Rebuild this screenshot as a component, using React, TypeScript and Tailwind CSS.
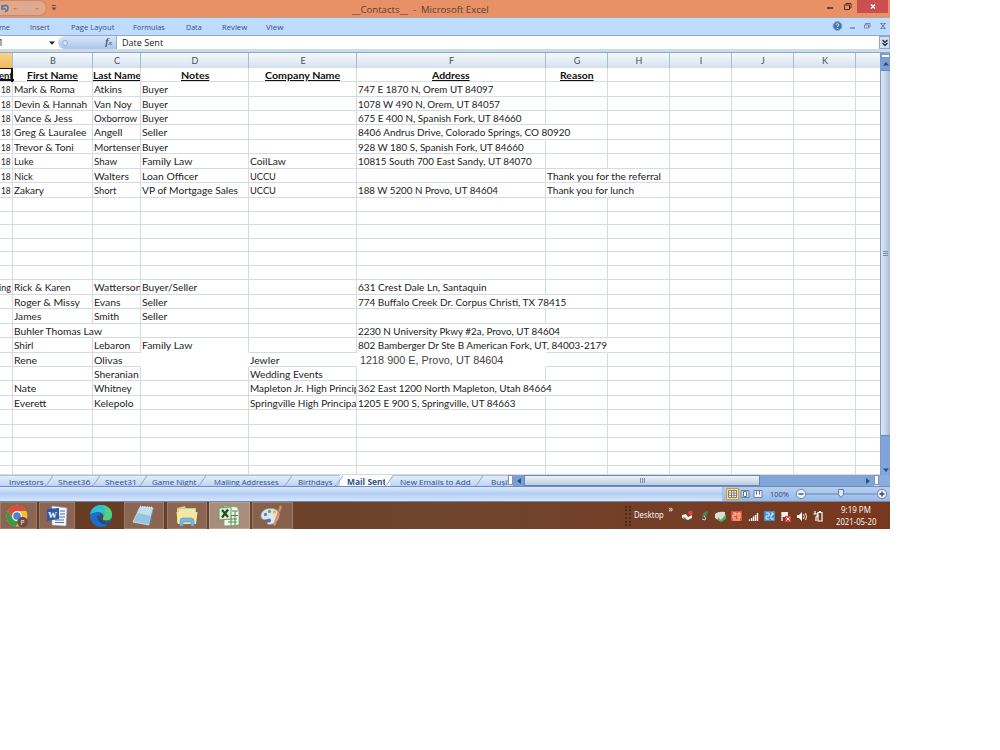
import { useLayoutEffect, useRef, type ReactNode } from 'react'

// Renders a label squeezed or stretched to an exact width in pixels
function Fit({ w, className = '', children }: { w: number; className?: string; children: ReactNode }) {
    const ref = useRef<HTMLSpanElement>(null)

    useLayoutEffect(() => {
        const el = ref.current
        if (!el) return
        el.style.transform = `scaleX(${w / el.offsetWidth})`
    }, [w])

    return (
        <span className="inline-block flex-none whitespace-nowrap" style={{ width: w }}>
            <span ref={ref} className={`inline-block origin-left ${className}`}>
                {children}
            </span>
        </span>
    )
}

const columns = [
    { name: '', width: 13 },
    { name: 'B', width: 80 },
    { name: 'C', width: 48 },
    { name: 'D', width: 108 },
    { name: 'E', width: 108 },
    { name: 'F', width: 189 },
    { name: 'G', width: 62 },
    { name: 'H', width: 62 },
    { name: 'I', width: 62 },
    { name: 'J', width: 62 },
    { name: 'K', width: 62 },
    { name: '', width: 24 },
]

type Cell = [text: string, width: number]
type Row = { h: number; cells?: Record<number, Cell>; open?: number[]; bare?: number[] }

// open: columns without a right grid line, bare: columns without a bottom grid line
const rows: Row[] = [
    { h: 15, cells: { 0: ['18', 10], 1: ['Mark & Roma', 61], 2: ['Atkins', 27.5], 3: ['Buyer', 26], 5: ['747 E 1870 N, Orem UT 84097', 135] } },
    { h: 14, cells: { 0: ['18', 10], 1: ['Devin & Hannah', 73], 2: ['Van Noy', 37.5], 3: ['Buyer', 26], 5: ['1078 W 490 N, Orem, UT 84057', 142] } },
    { h: 14, cells: { 0: ['18', 10], 1: ['Vance & Jess', 59], 2: ['Oxborrow', 43.5], 3: ['Buyer', 26], 5: ['675 E 400 N, Spanish Fork, UT 84660', 163.5] } },
    { h: 15, cells: { 0: ['18', 10], 1: ['Greg & Lauralee', 73], 2: ['Angell', 28], 3: ['Seller', 25], 5: ['8406 Andrus Drive, Colorado Springs, CO 80920', 212.5] }, open: [5] },
    { h: 14, cells: { 0: ['18', 10], 1: ['Trevor & Toni', 60], 2: ['Mortensen', 48], 3: ['Buyer', 26], 5: ['928 W 180 S, Spanish Fork, UT 84660', 165.5] } },
    { h: 15, cells: { 0: ['18', 10], 1: ['Luke', 20], 2: ['Shaw', 23.5], 3: ['Family Law', 50], 4: ['CoilLaw', 36], 5: ['10815 South 700 East Sandy, UT 84070', 174] } },
    { h: 14, cells: { 0: ['18', 10], 1: ['Nick', 19], 2: ['Walters', 35], 3: ['Loan Officer', 56], 4: ['UCCU', 26], 6: ['Thank you for the referral', 114] }, open: [6] },
    { h: 15, cells: { 0: ['18', 10], 1: ['Zakary', 30], 2: ['Short', 22.5], 3: ['VP of Mortgage Sales', 96], 4: ['UCCU', 26], 5: ['188 W 5200 N Provo, UT 84604', 139.5], 6: ['Thank you for lunch', 87] }, open: [6] },
    { h: 14 },
    { h: 13 },
    { h: 14 },
    { h: 13 },
    { h: 14 },
    { h: 14 },
    { h: 15, cells: { 0: ['ning', 17], 1: ['Rick & Karen', 57], 2: ['Watterson', 47.5], 3: ['Buyer/Seller', 55], 5: ['631 Crest Dale Ln, Santaquin', 129] } },
    { h: 14, cells: { 1: ['Roger & Missy', 66], 2: ['Evans', 26], 3: ['Seller', 25], 5: ['774 Buffalo Creek Dr. Corpus Christi, TX 78415', 208] }, open: [5] },
    { h: 15, cells: { 1: ['James', 27.5], 2: ['Smith', 25], 3: ['Seller', 25] } },
    { h: 14, cells: { 1: ['Buhler Thomas Law', 88], 5: ['2230 N University Pkwy #2a, Provo, UT 84604', 202.5] }, open: [1, 5] },
    { h: 15, cells: { 1: ['Shirl', 19], 2: ['Lebaron', 36], 3: ['Family Law', 50], 5: ['802 Bamberger Dr Ste B American Fork, UT, 84003-2179', 249] }, open: [5, 6], bare: [3, 5] },
    { h: 14, cells: { 1: ['Rene', 23], 2: ['Olivas', 28.5], 4: ['Jewler', 29], 5: ['1218 900 E, Provo, UT 84604', 143] }, open: [2, 3, 4, 5], bare: [3, 5] },
    { h: 14, cells: { 2: ['Sheranian', 44.5], 4: ['Wedding Events', 72.5] } },
    { h: 15, cells: { 1: ['Nate', 22], 2: ['Whitney', 38], 4: ['Mapleton Jr. High Principal', 117], 5: ['362 East 1200 North Mapleton, Utah 84664', 193.5] }, open: [5] },
    { h: 14, cells: { 1: ['Everett', 32], 2: ['Kelepolo', 39], 4: ['Springville High Principal', 109], 5: ['1205 E 900 S, Springville, UT 84663', 157.5] } },
    { h: 15 },
    { h: 13 },
    { h: 14 },
    { h: 14 },
    { h: 9 },
]

const titles: Record<number, Cell> = {
    1: ['First Name', 50.5],
    2: ['Last Name', 48],
    3: ['Notes', 28],
    4: ['Company Name', 75],
    5: ['Address', 37.5],
    6: ['Reason', 34],
}

const ribbonTabs = [
    { label: 'ome', w: 15, gap: 'ml-[-5px]' },
    { label: 'Insert', w: 20, gap: 'ml-[19.5px]' },
    { label: 'Page Layout', w: 43, gap: 'ml-[21px]' },
    { label: 'Formulas', w: 32, gap: 'ml-[19.5px]' },
    { label: 'Data', w: 16, gap: 'ml-[21px]' },
    { label: 'Review', w: 25, gap: 'ml-[20px]' },
    { label: 'View', w: 17, gap: 'ml-[19px]' },
]

const sheets = [
    { name: 'Investors', w: 34.5, box: 'w-[50px] pl-[8.5px]' },
    { name: 'Sheet36', w: 32, box: 'w-[47px] pl-[7.5px]' },
    { name: 'Sheet31', w: 31.5, box: 'w-[47px] pl-[7.5px]' },
    { name: 'Game Night', w: 44, box: 'w-[59px] pl-[8px]' },
    { name: 'Mailing Addresses', w: 65, box: 'w-[86px] pl-[11px]' },
    { name: 'Birthdays', w: 34, box: 'w-[51px] pl-[9px]' },
    { name: 'Mail Sent', w: 39, box: 'w-[50px] pl-[6.5px]', active: true },
    { name: 'New Emails to Add', w: 71, box: 'w-[90px] pl-[10px]' },
    { name: 'Busine', w: 25.5, box: 'w-[28px] pl-[11px] overflow-hidden' },
]

function TitleBar() {
    return (
        <div className="relative flex h-[18px] border-b border-[#b9a29a] bg-[#e89166]">
            <div className="flex h-4 w-[47px] items-center rounded-r-full border border-l-0 border-[#c98a6c] bg-[#e3a889]">
                <svg className="h-[14px] w-[46px]" viewBox="0 0 46 14" fill="none">
                    <path d="M2 4v4h4M2 7c2-4 6-3 6 0 0 2-1 3-3 4" stroke="#4f77ab" strokeWidth="1.6" />
                    <path d="M13 7h4l-2 2zM35 7h4l-2 2z" fill="#a6877d" />
                    <path d="M30 4v4h-4M30 7c-2-4-6-3-6 0 0 2 1 3 3 4" stroke="#c9afa4" strokeWidth="1.4" />
                </svg>
            </div>
            <svg className="ml-1 mt-[5px] h-[6px] w-[6px]" viewBox="0 0 6 6">
                <path d="M1 0h4v1H1zM0.5 2.5h5L3 5.5z" fill="#6b4a3e" />
            </svg>
            <div className="ml-[295px] flex pt-[2px] text-[9.5px] leading-[15px] text-[#5b4036]">
                <Fit w={136.5}>__Contacts__&nbsp; -&nbsp; Microsoft Excel</Fit>
            </div>
            <svg className="ml-auto h-[17px] w-[70px]" viewBox="0 0 70 17" fill="none">
                <path d="M7 8h6" stroke="#4b3128" strokeWidth="1.6" />
                <path d="M24.500 5h5v4.500h-5zM26 5V3.500h5v4.500h-1.500" stroke="#4b3128" />
                <path d="M37 0h31v13H37z" fill="#c94f50" />
                <path d="M51 4.500l4 4M55 4.500l-4 4" stroke="#fff" strokeWidth="1.400" />
            </svg>
        </div>
    )
}

function Ribbon() {
    return (
        <div className="flex h-[18px] items-center border-b border-[#8ea9cb] bg-[#bfdbff] text-[8px] text-[#35507d]">
            {ribbonTabs.map((tab) => (
                <div key={tab.label} className={`flex pt-px ${tab.gap}`}>
                    <Fit w={tab.w}>{tab.label}</Fit>
                </div>
            ))}
            <svg className="ml-auto h-4 w-[60px]" viewBox="0 0 60 16" fill="none">
                <circle cx="7.500" cy="7" r="4.300" fill="#3f74b8" stroke="#8095b3" />
                <path d="M6 5.700c.3-1.500 3-1.300 2.700.2-.2 1-1.300 1-1.300 2M7.400 9v1" stroke="#fff" strokeWidth=".9" />
                <path d="M20 9h5" stroke="#6a7c98" strokeWidth="1.300" />
                <path d="M34.500 6h4v3h-4zM35.500 6V4.500h4.500V8h-1" stroke="#76879f" />
                <path d="M51 4.500l4 5M55 4.500l-4 5M50.500 4.500h2M53.500 4.500h2M50.500 9.500h2M53.500 9.500h2" stroke="#64748f" />
            </svg>
        </div>
    )
}

function FormulaBar() {
    return (
        <div className="flex h-[16px] border-b-[3px] border-[#cddbe8] bg-white text-[9.5px] leading-[14px] text-[#222]">
            <div className="flex w-[58px] items-center justify-between pr-[3px]">
                <span className="ml-[-2px]">1</span>
                <svg className="h-[4px] w-[6px]" viewBox="0 0 6 4">
                    <path d="M0 0.500h6L3 3.800z" fill="#222" />
                </svg>
            </div>
            <div className="flex w-[59px] items-center justify-between rounded-l-full border-r border-[#93aed0] bg-linear-to-b from-[#d9e8fb] to-[#a9c5ea] pl-[4px] pr-[4px]">
                <span className="h-[6px] w-[6px] rounded-full border border-[#91abd0] bg-[#d7e5f7]" />
                <span className="font-['Liberation_Serif',serif] text-[10px] font-bold italic text-[#48566b]">
                    f<span className="text-[7px]">x</span>
                </span>
            </div>
            <div className="flex pl-[5px]">
                <Fit w={41}>Date Sent</Fit>
            </div>
            <div className="ml-auto flex h-[13px] w-[11px] items-center justify-center border border-[#8ba7cd] bg-[#cfe0f6]">
                <svg className="h-[8px] w-[6px]" viewBox="0 0 6 8" fill="none">
                    <path d="M0.500 1L3 3.500 5.500 1M0.500 4L3 6.500 5.500 4" stroke="#222" strokeWidth="1.200" />
                </svg>
            </div>
        </div>
    )
}

function Grid() {
    return (
        <div className="w-[880px] overflow-hidden bg-white">
            <div className="flex h-[16px] border-t border-[#8ba9cb] bg-linear-to-b from-[#f5f9fd] to-[#d6e1ee] text-[9px] leading-[16px] text-[#4a4f57]">
                {columns.map((col, i) => (
                    <div
                        key={i}
                        className={`flex-none border-r border-[#a3bdd8] pl-px text-center last:border-r-0 ${i === 0 ? 'bg-linear-to-b from-[#f8d48a] to-[#f0b95b]' : ''}`}
                        style={{ width: col.width }}
                    >
                        {col.name}
                    </div>
                ))}
            </div>
            <div className="flex h-[14px] text-[9.5px] font-bold leading-[15px] text-[#111]">
                {columns.map((col, i) => (
                    <div
                        key={i}
                        className={`relative flex flex-none justify-center border-b border-r border-[#d5dce0] last:border-r-0 ${i === 2 ? 'overflow-hidden' : ''}`}
                        style={{ width: col.width }}
                    >
                        {i === 0 && (
                            <>
                                <Fit w={14}>ent</Fit>
                                <span className="absolute inset-y-0 -left-1 -right-px border-b-2 border-r-2 border-t border-[#111]" />
                                <span className="absolute -bottom-px -right-[2px] h-[3px] w-[3px] bg-[#111]" />
                            </>
                        )}
                        {titles[i] && (
                            <Fit w={titles[i][1]} className="underline decoration-1 underline-offset-1">
                                {titles[i][0]}
                            </Fit>
                        )}
                    </div>
                ))}
            </div>
            {rows.map((row, r) => (
                <div key={r} className="flex text-[10px] leading-[15px] text-[#222]" style={{ height: row.h }}>
                    {columns.map((col, i) => {
                        const cell = row.cells?.[i]
                        const edges = [
                            row.open?.includes(i) ? 'border-r-transparent' : 'border-r-[#d5dce0]',
                            row.bare?.includes(i) ? 'border-b-transparent' : 'border-b-[#d5dce0]',
                            i === 11 ? '' : 'border-r',
                            i === 2 || i === 4 ? 'overflow-hidden' : '',
                            i === 0 ? 'justify-end overflow-hidden pr-[1px]' : cell?.[0].startsWith('1218') ? '' : 'pl-[1px]',
                            cell?.[0].startsWith('1218') ? "pl-[2.5px] font-['Liberation_Sans',sans-serif] text-[11px] text-[#444]" : '',
                        ]
                        return (
                            <div key={i} className={`flex flex-none border-b ${edges.join(' ')}`} style={{ width: col.width }}>
                                {cell && <Fit w={cell[1]}>{cell[0]}</Fit>}
                            </div>
                        )
                    })}
                </div>
            ))}
        </div>
    )
}

function VerticalScroll() {
    return (
        <div className="flex w-[10px] flex-col border-l border-[#7d9cc9] bg-[#7fa5d9]">
            <div className="mt-[2px] h-[4px] border border-[#8096b8] bg-white" />
            <div className="flex h-[12px] items-center justify-center bg-[#7b9fd3]">
                <svg className="h-[4px] w-[6px]" viewBox="0 0 6 4">
                    <path d="M0 3.500h6L3 0z" fill="#2f4e80" />
                </svg>
            </div>
            <div className="flex h-[366px] items-center justify-center border-y border-[#6785b4] bg-linear-to-r from-[#dfe7f3] via-[#c9d5e8] to-[#a9bad8]">
                <div className="h-[5px] w-[5px] border-y border-[#7a8ba8]">
                    <div className="mt-[1px] h-px bg-[#7a8ba8]" />
                </div>
            </div>
            <div className="flex flex-1 items-end justify-center pb-[3px]">
                <svg className="h-[4px] w-[6px]" viewBox="0 0 6 4">
                    <path d="M0 0.500h6L3 4z" fill="#2f4e80" />
                </svg>
            </div>
        </div>
    )
}

function SheetBar() {
    return (
        <div className="flex h-[12px] border-b border-[#6f8db5] bg-[#cfe0f6] text-[8px] leading-[12px] text-[#2c5187]">
            <div className="flex w-[508px] overflow-hidden">
                {sheets.map((sheet) => (
                    <div
                        key={sheet.name}
                        className={`relative flex flex-none border-t ${sheet.active ? 'border-white bg-white font-bold' : 'border-[#a9c0de] bg-linear-to-b from-[#e3edfa] to-[#bdd4f5]'} ${sheet.box}`}
                    >
                        <Fit w={sheet.w}>{sheet.name}</Fit>
                        <svg className="absolute -right-[4px] bottom-0 z-10 h-[11px] w-[9px]" viewBox="0 0 9 11" fill="none">
                            {sheet.active && <path d="M0 0h8L1 11H0z" fill="#fff" />}
                            <path d="M8 0.500L2 9.500Q1.500 10.500 0 10.500" stroke="#8fa4c0" />
                        </svg>
                    </div>
                ))}
            </div>
            <div className="h-[10px] w-[5px] border border-[#8096b8] bg-white" />
            <div className="flex w-[11px] items-center justify-center bg-[#7b9fd3]">
                <svg className="h-[6px] w-[4px]" viewBox="0 0 4 6">
                    <path d="M4 0v6L0 3z" fill="#2f4e80" />
                </svg>
            </div>
            <div className="flex w-[236px] items-center justify-center border border-[#6785b4] bg-linear-to-b from-[#eef2f8] to-[#bccbe1]">
                <div className="flex h-[5px] w-[5px] justify-center border-x border-[#7a8ba8]">
                    <div className="w-px bg-[#7a8ba8]" />
                </div>
            </div>
            <div className="flex flex-1 items-center justify-end bg-[#7fa5d9] pr-[4px]">
                <svg className="h-[6px] w-[4px]" viewBox="0 0 4 6">
                    <path d="M0 0v6l4-3z" fill="#2f4e80" />
                </svg>
            </div>
            <div className="h-[10px] w-[5px] border border-[#8096b8] bg-white" />
            <div className="w-[11px] bg-[#8aade0]" />
        </div>
    )
}

function StatusBar() {
    return (
        <div className="flex h-[15px] items-center justify-end border-b border-[#7288a8] bg-linear-to-b from-[#dce9fb] via-[#b4cff5] to-[#d6e6fb] text-[8px] text-[#2d4a78]">
            <div className="flex h-full w-[168px] items-center border-l border-[#a6bddb] bg-linear-to-b from-[#b6cff0] to-[#98b9e6]">
                <svg className="ml-[3px] h-[12px] w-[38px]" viewBox="0 0 38 12" fill="none">
                    <path d="M.5.500h12v11H.500z" fill="#fbd98f" stroke="#c79b4d" />
                    <path d="M2.500 2.500h8v7h-8zM2.500 5h8M2.500 7.300h8M5.500 2.500v7M8 2.500v7" stroke="#6b6759" strokeWidth=".8" fill="#fff" />
                    <path d="M15 2.500h8v7h-8z" fill="#cbd4e1" stroke="#75839a" />
                    <path d="M17.500 3.500h3v5h-3z" fill="#fff" stroke="#66748a" />
                    <path d="M28 2.500h8v7h-8z" fill="#eef2f8" stroke="#75839a" />
                    <path d="M30.500 2.500v4M33.500 2.500v4" stroke="#66748a" />
                </svg>
                <span className="ml-[6px] flex">
                    <Fit w={18.5}>100%</Fit>
                </span>
                <svg className="ml-[5px] h-[14px] w-[94px]" viewBox="0 0 94 14" fill="none">
                    <path d="M12 7h70" stroke="#6784ad" />
                    <circle cx="7" cy="7" r="4.700" fill="#e8f0fa" stroke="#6d83a3" />
                    <path d="M4.500 7h5" stroke="#33435c" strokeWidth="1.300" />
                    <path d="M44.500 2.500h5v5L47 10.500l-2.500-3z" fill="#dce8f7" stroke="#6379a0" />
                    <circle cx="88" cy="7" r="4.700" fill="#e8f0fa" stroke="#6d83a3" />
                    <path d="M85.500 7h5M88 4.500v5" stroke="#33435c" strokeWidth="1.300" />
                </svg>
            </div>
        </div>
    )
}

function ChromeIcon() {
    return (
        <svg className="h-[24px] w-[24px]" viewBox="0 0 24 24">
            <circle cx="12" cy="12" r="10.500" fill="#f2c230" />
            <path d="M2.900 6.700A10.500 10.500 0 0 1 21.200 7H12a5 5 0 0 0-4.500 7z" fill="#dc4b3e" />
            <path d="M2.900 6.700l4.500 7.800A5 5 0 0 0 13 17l-2 5.400A10.500 10.500 0 0 1 2.900 6.700z" fill="#2f9b50" />
            <circle cx="12" cy="12" r="4.800" fill="#fff" />
            <circle cx="12" cy="12" r="3.800" fill="#4285dd" />
            <circle cx="17.500" cy="18" r="5.300" fill="#6d4b40" />
            <text x="15.600" y="20.500" fontSize="6.500" fill="#fff" fontFamily="Open Sans, sans-serif">P</text>
        </svg>
    )
}

function WordIcon() {
    return (
        <svg className="h-[22px] w-[22px]" viewBox="0 0 22 22">
            <path d="M6 1l15 2-1 18-14-1z" fill="#f2f5fa" stroke="#9aacc8" strokeWidth=".6" />
            <path d="M14 6h5M14 9h5M13 12h6M9 15h9M9 17.500h9" stroke="#4a70af" />
            <path d="M1 4l12-1v11L1 16z" fill="#2d5ba5" />
            <text x="2" y="12.500" fontSize="9" fontWeight="bold" fill="#fff" fontFamily="Liberation Serif, serif">W</text>
        </svg>
    )
}

function EdgeIcon() {
    return (
        <svg className="h-[24px] w-[24px]" viewBox="0 0 24 24">
            <circle cx="12" cy="12" r="11" fill="#1b6fc4" />
            <path d="M1.200 10C2 4 7 1 12 1c6 0 11 4 11 9.500 0 4-3 6-6.500 6-2.500 0-3.500-1-2.500-2.500 2-4-2-6-5-6-4 0-7 2-7.800 2z" fill="#31bfd4" />
            <path d="M14 1.200c6 1 9 5 9 9.300 0 4-3 6-6.500 6-2.500 0-3.500-1-2.500-2.500C17 10 17 5 14 1.200z" fill="#55cf79" />
            <path d="M8.500 11c-1.500 5 3 10 10.500 9.500l2-2.500c-3 1.500-8 .5-8.500-4.500z" fill="#104e96" />
            <path d="M11.500 9.500c2 0 3.500 2 2.500 4.500-1 1.500 0 2.500 2.500 2.500h5.500c-1 2-3 2-5 1.800-4-.5-7-4.300-5.500-8.800z" fill="#6b4029" />
        </svg>
    )
}

function NotepadIcon() {
    return (
        <svg className="h-[22px] w-[22px]" viewBox="0 0 22 22">
            <path d="M8 2l13 1-4 17-16-3z" fill="#94c5dc" stroke="#d8e6ec" strokeWidth=".8" />
            <path d="M8 2l13 1-2 8L5 8z" fill="#bde0ec" />
            <path d="M21 3l-1 14-3 3z" fill="#607b8b" />
            <path d="M8 1.500l13 1" stroke="#e7eaec" strokeWidth="1.500" strokeDasharray="1.200 1" />
        </svg>
    )
}

function FolderIcon() {
    return (
        <svg className="h-[22px] w-[24px]" viewBox="0 0 24 22">
            <path d="M2 3l8-2 1 2h10v15H2z" fill="#e8c766" />
            <path d="M4 4h16v5H4z" fill="#d9edc4" />
            <path d="M1.500 7h21L21 19H3z" fill="#f7e5a1" />
            <path d="M5 21v-5q0-3 3-3h8q3 0 3 3v5h-3v-4H8v4z" fill="#79b9e1" stroke="#4d91c5" strokeWidth=".6" />
        </svg>
    )
}

function ExcelIcon() {
    return (
        <svg className="h-[22px] w-[22px]" viewBox="0 0 22 22">
            <path d="M6 1l13 1 2 4v14l-15 1z" fill="#f3f8f0" stroke="#79a56a" strokeWidth=".8" />
            <path d="M10 14h9M10 17h9M13 10v10M17 6v14M13 10.500h7M14 6h6" stroke="#4a8e46" />
            <path d="M1 3l12-1v12L1 15z" fill="#e0efd5" stroke="#66a050" />
            <path d="M4 5l6 7M10 4.500L4 12.500" stroke="#1d4c23" strokeWidth="2.200" />
        </svg>
    )
}

function PaintIcon() {
    return (
        <svg className="h-[24px] w-[24px]" viewBox="0 0 24 24">
            <path d="M2 12c0-5 5-8 10-7.500 6 0 9 4 8 8-1 5-5 8-10 8-2 0-2-2-1-3s0-2.500-2-2-5 0-5-3.500z" fill="#dfe5ea" stroke="#8e9aa6" strokeWidth=".6" />
            <circle cx="6.500" cy="10.500" r="1.700" fill="#4a8acb" />
            <circle cx="10.500" cy="7.500" r="1.700" fill="#6db04a" />
            <circle cx="15.500" cy="8" r="1.700" fill="#e6b93c" />
            <circle cx="10" cy="16.500" r="2" fill="#4a6fb5" />
            <path d="M19 7l2-6 2 2-2 5zM18.500 8l2.500 1-5 13-2-1z" fill="#d9935c" />
        </svg>
    )
}

const tasks = [
    { icon: ChromeIcon, box: 'w-[37px] bg-[#8b6552] border-[#9b7b6b] pr-[3px]' },
    { icon: WordIcon, box: 'ml-[2px] w-[36px] bg-[#8b6552] border-[#9b7b6b]' },
    { icon: EdgeIcon, box: 'ml-[4px] w-[43px] border-transparent' },
    { icon: NotepadIcon, box: 'ml-[2px] w-[40px] bg-[#8b6552] border-[#9b7b6b] pr-[2px]' },
    { icon: FolderIcon, box: 'ml-[3px] w-[40px] bg-[#8b6552] border-[#9b7b6b]' },
    { icon: ExcelIcon, box: 'ml-[2px] w-[41px] bg-[#a78d7e] border-[#b9a397] pr-[2px]' },
    { icon: PaintIcon, box: 'ml-[2px] w-[41px] bg-[#85604d] border-[#9b7b6b] pr-[3px]' },
]

function Tray() {
    return (
        <svg className="h-[16px] w-[146px]" viewBox="0 0 146 16" fill="none">
            <path d="M2 7l4-1 2 3 4-2v3l-4 2-6-2z" fill="#eef0ea" />
            <circle cx="10.500" cy="5" r="2.300" fill="#e2453c" />
            <path d="M3 9l3 1-1 2z" fill="#3c8b4f" />
            <path d="M22 9q0-5 6-6-1 6-4 6z" fill="#3f8a55" />
            <path d="M24 8q3 2 1 4l-3-1" stroke="#c8cfc8" />
            <path d="M35 6q3-3 10-2v5l-5 4-5-3z" fill="#d9dfd8" />
            <path d="M38 9l3 3 5-6v5l-5 3-3-2z" fill="#54b255" />
            <path d="M51 3h11v10H51z" fill="#e2503b" />
            <path d="M53 5h3v2h-3v3h3M58 5h2v5h-2zM53 12h7" stroke="#f7d9b0" />
            <path d="M69.500 13v-1.500M71.500 13v-3M73.500 13V8.500M75.500 13V7M77.500 13V5" stroke="#fff" strokeWidth="1.400" />
            <path d="M84 3h11v10H84z" fill="#3e93cf" />
            <path d="M86 5h3v3h-3v3h3M91 5h2v2h-2v4h3" stroke="#e9f5fd" />
            <path d="M102 4v9" stroke="#fff" strokeWidth="1.200" />
            <path d="M102 4h6v5h-6z" fill="#f1ece9" />
            <path d="M105 8h6v6h-6z" fill="#d8473b" />
            <path d="M106.500 9.500l3 3M109.500 9.500l-3 3" stroke="#fff" />
            <path d="M117 7h2l3-3v9l-3-3h-2z" fill="#fff" />
            <path d="M123.500 6q1.500 2.500 0 5M125.500 5q2 3.500 0 7" stroke="#fff" strokeWidth=".9" />
            <path d="M138 4.500h4v8.500h-4zM139 3.500h2M135 3v3M133.500 6h4v2l-1.500 1v4" stroke="#fff" strokeWidth="1.200" />
        </svg>
    )
}

function Taskbar() {
    return (
        <div className="flex h-[27px] bg-linear-to-r from-[#643a23] via-[#70452d] to-[#78371f] text-[8.5px] text-white">
            {tasks.map((task, i) => (
                <div key={i} className={`flex flex-none items-center justify-center border ${task.box}`}>
                    <task.icon />
                </div>
            ))}
            <div className="ml-auto flex items-center">
                <div className="mr-[3px] h-[20px] w-[6px] border-x-2 border-dotted border-[#4c2919]" />
                <Fit w={30}>Desktop</Fit>
                <span className="mb-[14px] ml-[5px] text-[9px]">»</span>
                <span className="ml-[7px]">
                    <Tray />
                </span>
                <div className="flex w-[64px] flex-col items-center pr-[5px] leading-[12px]">
                    <Fit w={30}>9:19 PM</Fit>
                    <Fit w={40}>2021-05-20</Fit>
                </div>
            </div>
        </div>
    )
}

export default function App() {
    return (
        <div className="h-[750px] w-[1000px] overflow-hidden bg-white">
            <div className="w-[890px] overflow-hidden font-['Open_Sans','Noto_Sans',sans-serif]">
                <TitleBar />
                <Ribbon />
                <FormulaBar />
                <div className="flex h-[423px] font-['Lato',sans-serif]">
                    <Grid />
                    <VerticalScroll />
                </div>
                <SheetBar />
                <StatusBar />
                <Taskbar />
            </div>
        </div>
    )
}
